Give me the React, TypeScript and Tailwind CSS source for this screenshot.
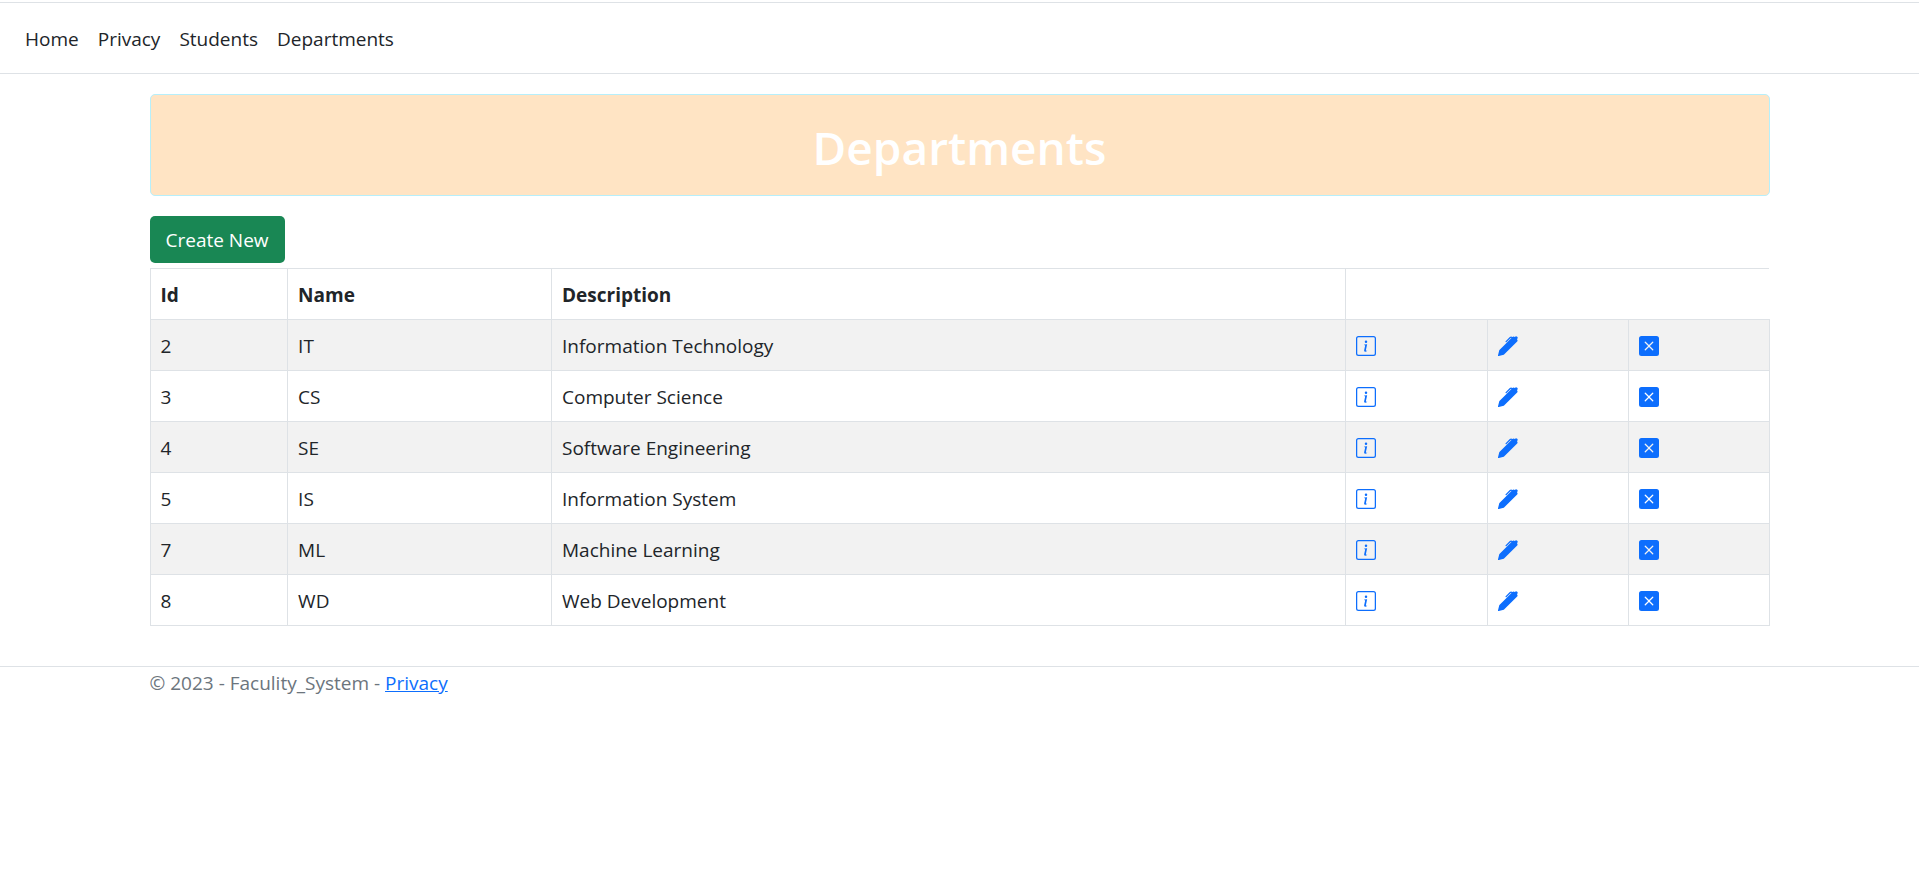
import { BsInfoSquare, BsPenFill, BsXSquareFill } from "react-icons/bs";

const links = ["Home", "Privacy", "Students", "Departments"];

const departments = [
  { id: 2, name: "IT", description: "Information Technology" },
  { id: 3, name: "CS", description: "Computer Science" },
  { id: 4, name: "SE", description: "Software Engineering" },
  { id: 5, name: "IS", description: "Information System" },
  { id: 7, name: "ML", description: "Machine Learning" },
  { id: 8, name: "WD", description: "Web Development" },
];

const actions = [
  { label: "Details", Icon: BsInfoSquare },
  { label: "Edit", Icon: BsPenFill },
  { label: "Delete", Icon: BsXSquareFill },
];

const cell = "border border-[#dee2e6] px-2.5 pt-[11px] pb-[9px] text-left";

function Header() {
  return (
    <header className="mt-0.5 mb-5 border-y border-[#dee2e6]">
      <nav className="flex gap-[19px] px-[25px] pt-[21px] pb-[19px]">
        {links.map((label) => (
          <a key={label} href="#">
            {label}
          </a>
        ))}
      </nav>
    </header>
  );
}

function DepartmentTable() {
  return (
    <table className="mt-[5px] w-full table-fixed border-collapse">
      <colgroup>
        <col className="w-[8.5%]" />
        <col className="w-[16.3%]" />
        <col className="w-[49.05%]" />
        <col className="w-[8.75%]" />
        <col className="w-[8.7%]" />
        <col className="w-[8.7%]" />
      </colgroup>
      <thead>
        <tr>
          <th className={cell}>Id</th>
          <th className={cell}>Name</th>
          <th className={cell}>Description</th>
          <td colSpan={3} className="border-y border-l border-[#dee2e6]" />
        </tr>
      </thead>
      <tbody>
        {departments.map((d) => (
          <tr key={d.id} className="odd:bg-[#f2f2f2]">
            <td className={cell}>{d.id}</td>
            <td className={cell}>{d.name}</td>
            <td className={cell}>{d.description}</td>
            {actions.map(({ label, Icon }) => (
              <td key={label} className={cell}>
                <a
                  href="#"
                  aria-label={`${label} ${d.name}`}
                  className="flex h-[30px] w-5 items-center text-[#0d6efd]"
                >
                  <Icon size={20} />
                </a>
              </td>
            ))}
          </tr>
        ))}
      </tbody>
    </table>
  );
}

export default function App() {
  return (
    <div className="font-['Open_Sans','Noto_Sans',sans-serif] text-[19px] leading-[30px] text-[#212529]">
      <Header />
      <main className="mx-auto max-w-[1650px] px-[15px]">
        <h1 className="mb-5 rounded-[5px] border border-[#b6effb] bg-[#ffe4c4] pt-[22px] pb-[18px] text-center text-[46px] leading-[60px] font-semibold text-white">
          Departments
        </h1>
        <a
          href="#"
          className="inline-block rounded-[5px] bg-[#198754] px-4 pt-[9px] pb-2 align-top text-white"
        >
          Create New
        </a>
        <DepartmentTable />
      </main>
      <footer className="mt-10 border-t border-[#dee2e6] text-[#6c757d]">
        <div className="mx-auto max-w-[1650px] px-[15px] pt-px">
          © 2023 - Faculity_System -{" "}
          <a href="#" className="text-[#0d6efd] underline">
            Privacy
          </a>
        </div>
      </footer>
    </div>
  );
}
